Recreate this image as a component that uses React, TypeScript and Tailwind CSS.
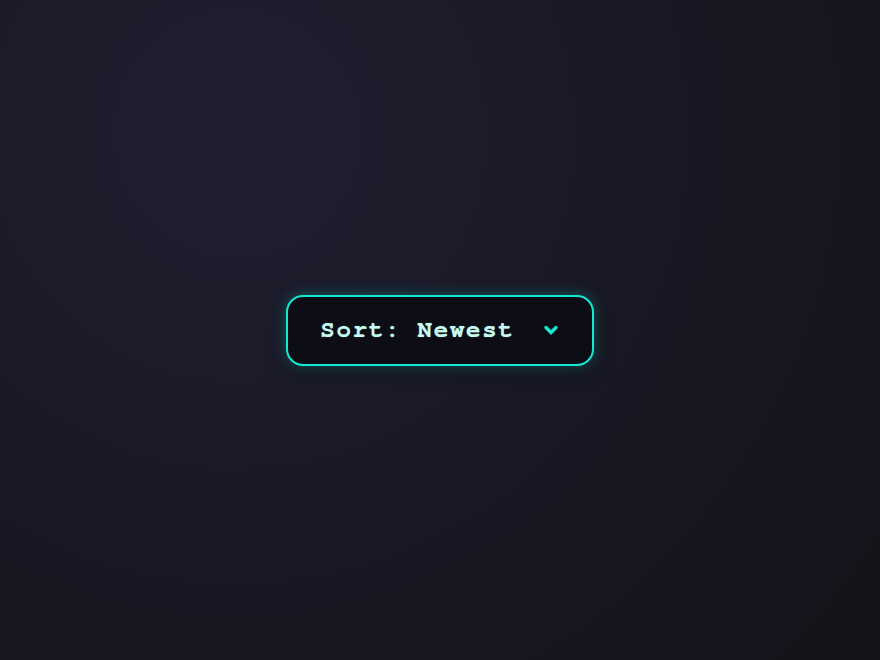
import React from "react";

function Chevron() {
  return (
    <svg width="14" height="11" viewBox="0 0 14 11" fill="none" className="text-[#12e8d2]">
      <path
        d="M2 2.5 L7 7.5 L12 2.5"
        stroke="currentColor"
        strokeWidth="3.4"
        strokeLinecap="round"
        strokeLinejoin="miter"
      />
    </svg>
  );
}

export default function App() {
  return (
    <div className="flex h-screen w-full items-center justify-center bg-[radial-gradient(circle_at_27%_20%,#1f1f30_0%,#191926_45%,#131319_100%)]">
      <button
        type="button"
        className="flex items-center gap-[29px] rounded-[17px] border-2 border-[#12e8d2] bg-[#0c0d15] py-[20px] pl-[32px] pr-[34px] shadow-[0_0_14px_rgba(18,232,210,0.3),0_6px_18px_rgba(0,0,0,0.35)]"
      >
        <span
          className="text-[24px] font-bold leading-[27px] tracking-[1.8px] text-[#c6fbf3] [text-shadow:0_0_1px_rgba(198,251,243,0.6)]"
          style={{ fontFamily: 'FreeMono, "Liberation Mono", monospace' }}
        >
          Sort: Newest
        </span>
        <Chevron />
      </button>
    </div>
  );
}
